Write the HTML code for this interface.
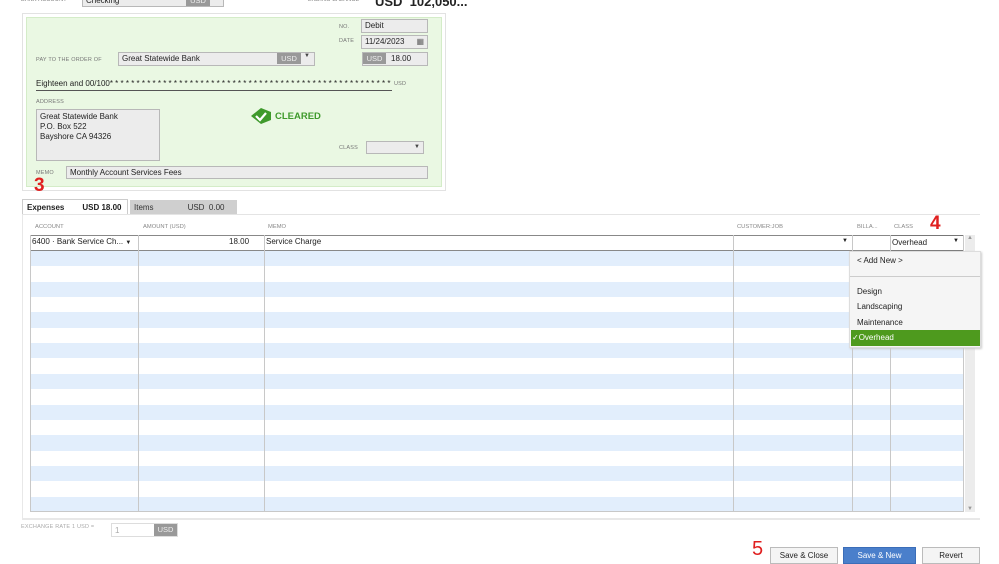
<!DOCTYPE html>
<html><head><meta charset="utf-8"><style>
*{margin:0;padding:0;box-sizing:border-box}
body{width:999px;height:562px;background:#fff;position:relative;overflow:hidden;font-family:"Liberation Sans",Arial,sans-serif;font-size:8px;color:#222}
.a{position:absolute}
.lbl{position:absolute;font-size:5.5px;color:#777;letter-spacing:.2px}
.fld{position:absolute;background:#ececec;border:1px solid #b8b8b8;font-size:8px;padding:1px 3px;line-height:9px}
.usd{position:absolute;background:#999;color:#eee;font-size:7.5px;text-align:center;line-height:11px}
.row{position:absolute;left:30px;width:934px;height:15.35px}
.vl{position:absolute;top:235px;height:277px;width:1px;background:#c8c8c8}
.hd{position:absolute;top:224px;font-size:5.8px;color:#888}
.btn{position:absolute;top:547px;height:17px;border:1px solid #bbb;background:#f4f4f4;font-size:8px;text-align:center;line-height:16px;color:#222}
</style></head><body>
<div class="lbl" style="left:21px;top:-3px">BANK ACCOUNT</div>
<div class="fld" style="left:82px;top:-6px;width:142px;height:13px">Checking</div>
<div class="usd" style="left:186px;top:-5px;width:24px">USD</div>
<div class="lbl" style="left:308px;top:-3px">ENDING BALANCE</div>
<div class="a" style="left:375px;top:-6px;font-size:13px;font-weight:bold">USD &nbsp;102,050...</div>

<div class="a" style="left:22px;top:13px;width:424px;height:178px;border:1px solid #e2e2e2;background:#fff"></div>
<div class="a" style="left:26px;top:17px;width:416px;height:170px;border:1px solid #d4ecc8;background:#eaf8e3"></div>
<div class="lbl" style="left:339px;top:24px">NO.</div>
<div class="fld" style="left:361px;top:19px;width:67px;height:14px">Debit</div>
<div class="lbl" style="left:339px;top:38px">DATE</div>
<div class="fld" style="left:361px;top:35px;width:67px;height:14px">11/24/2023<span style="float:right;color:#666">▦</span></div>
<div class="lbl" style="left:36px;top:57px">PAY TO THE ORDER OF</div>
<div class="fld" style="left:118px;top:52px;width:197px;height:14px">Great Statewide Bank</div>
<div class="usd" style="left:277px;top:53px;width:24px">USD</div>
<div class="a" style="left:304px;top:53px;font-size:6px;color:#444">▼</div>
<div class="fld" style="left:362px;top:52px;width:66px;height:14px;padding-left:28px">18.00</div>
<div class="usd" style="left:363px;top:53px;width:23px">USD</div>
<div class="a" style="left:36px;top:79px;width:356px;overflow:hidden;white-space:nowrap;font-size:8px">Eighteen and 00/100* * * * * * * * * * * * * * * * * * * * * * * * * * * * * * * * * * * * * * * * * * * * * * * * * * * * * * * * * * *</div>
<div class="a" style="left:36px;top:90px;width:356px;height:1px;background:#555"></div>
<div class="lbl" style="left:394px;top:81px">USD</div>
<div class="lbl" style="left:36px;top:99px">ADDRESS</div>
<div class="fld" style="left:36px;top:109px;width:124px;height:52px;line-height:10px;padding-top:2px">Great Statewide Bank<br>P.O. Box 522<br>Bayshore CA 94326</div>
<svg class="a" style="left:250px;top:107px" width="22" height="18" viewBox="0 0 22 18"><path d="M1 9 L11 1 L21 5 L21 13 L11 17 Z" fill="#3f9a2c"/><path d="M6 9 l4 4 l6 -7" stroke="#fff" stroke-width="2.2" fill="none"/></svg>
<div class="a" style="left:275px;top:111px;font-size:9.5px;font-weight:bold;color:#3f9a2c">CLEARED</div>
<div class="lbl" style="left:339px;top:145px">CLASS</div>
<div class="fld" style="left:366px;top:141px;width:58px;height:13px"><span style="float:right;font-size:6px;color:#444">▼</span></div>
<div class="lbl" style="left:36px;top:170px">MEMO</div>
<div class="fld" style="left:66px;top:166px;width:362px;height:13px">Monthly Account Services Fees</div>
<div class="a" style="left:34px;top:175px;font-size:19px;color:#e02020;font-weight:bold">3</div>

<div class="a" style="left:22px;top:199px;width:106px;height:16px;border:1px solid #ccc;border-bottom:none;background:#fff;font-size:8px;font-weight:bold;padding:3px 4px">Expenses<span style="margin-left:18px">USD 18.00</span></div>
<div class="a" style="left:130px;top:200px;width:107px;height:15px;background:#cfcfcf;font-size:8px;color:#333;padding:3px 4px">Items<span style="margin-left:34px">USD &nbsp;0.00</span></div>
<div class="a" style="left:22px;top:214px;width:958px;height:306px;border-top:1px solid #e4e4e4;border-bottom:2px solid #e8e8e8;border-left:1px solid #e8e8e8"></div>

<div class="hd" style="left:35px">ACCOUNT</div><div class="hd" style="left:143px">AMOUNT (USD)</div><div class="hd" style="left:268px">MEMO</div><div class="hd" style="left:737px">CUSTOMER:JOB</div><div class="hd" style="left:857px">BILLA...</div><div class="hd" style="left:894px">CLASS</div>
<div class="a" style="left:30px;top:235px;width:934px;height:16px;border:1px solid #888;background:#fff"></div>
<div class="a" style="left:32px;top:237px">6400 · Bank Service Ch... <span style="font-size:6px">▼</span></div>
<div class="a" style="left:229px;top:237px">18.00</div>
<div class="a" style="left:266px;top:237px">Service Charge</div>
<div class="a" style="left:842px;top:238px;font-size:6px">▼</div>
<div class="a" style="left:890px;top:235px;width:74px;height:16px;border:1px solid #777;padding:2px 1px">Overhead<span style="float:right;font-size:6px;margin-right:3px">▼</span></div>
<div class="a" style="left:930px;top:213px;font-size:19px;color:#e02020;font-weight:bold">4</div>

<div id="rows"></div>
<script>
var h='';for(var i=0;i<17;i++){h+='<div class="row" style="top:'+(251+i*15.35)+'px;background:'+(i%2?'#fff':'#e2eefc')+'"></div>';}
document.getElementById('rows').innerHTML=h;
</script>
<div class="vl" style="left:30px"></div><div class="vl" style="left:138px"></div><div class="vl" style="left:264px"></div><div class="vl" style="left:733px"></div><div class="vl" style="left:852px"></div><div class="vl" style="left:890px"></div><div class="vl" style="left:963px"></div>
<div class="a" style="left:30px;top:511px;width:934px;height:1px;background:#c8c8c8"></div>
<div class="a" style="left:965px;top:235px;width:10px;height:277px;background:#ececec;font-size:6px;color:#999;text-align:center">▲<div style="position:absolute;bottom:0;width:10px">▼</div></div>

<div class="a" style="left:849px;top:251px;width:132px;height:97px;background:#f5f5f5;border:1px solid #ddd;box-shadow:1px 1px 2px #ccc"></div>
<div class="a" style="left:857px;top:256px;font-size:8px">&lt; Add New &gt;</div>
<div class="a" style="left:850px;top:276px;width:130px;height:1px;background:#ccc"></div>
<div class="a" style="left:857px;top:287px">Design</div>
<div class="a" style="left:857px;top:302px">Landscaping</div>
<div class="a" style="left:857px;top:318px">Maintenance</div>
<div class="a" style="left:851px;top:330px;width:129px;height:16px;background:#4e9a1e;color:#fff;padding:3px 0 0 1px">✓Overhead</div>

<div class="lbl" style="left:21px;top:524px;color:#aaa">EXCHANGE RATE 1 USD =</div>
<div class="a" style="left:111px;top:523px;width:67px;height:14px;border:1px solid #ddd;color:#aaa;padding:2px 3px">1</div>
<div class="usd" style="left:154px;top:524px;width:23px;height:12px">USD</div>

<div class="a" style="left:752px;top:538px;font-size:20px;color:#e02020">5</div>
<div class="btn" style="left:770px;width:68px">Save &amp; Close</div>
<div class="btn" style="left:843px;width:73px;background:#4a7fcb;border-color:#3b6db8;color:#fff">Save &amp; New</div>
<div class="btn" style="left:922px;width:58px">Revert</div>
</body></html>
